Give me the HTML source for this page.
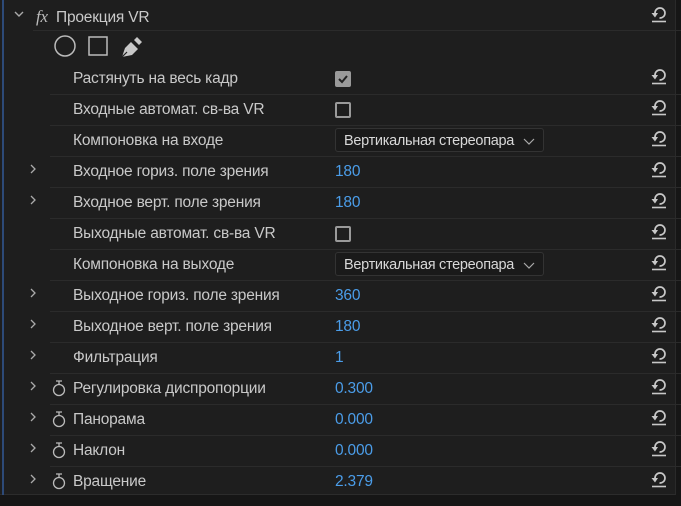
<!DOCTYPE html>
<html><head><meta charset="utf-8"><style>
*{margin:0;padding:0;box-sizing:border-box}
body{width:681px;height:506px;background:#161616;overflow:hidden;font-family:"Liberation Sans",sans-serif;color:#c9c9c9;position:relative}
#panel{position:absolute;left:0;top:0;width:676px;height:495px;background:#1e1e1e;border-right:1px solid #2a2a2a;border-bottom:1px solid #2c2c2c}
#bl{position:absolute;left:2px;top:0;width:2px;height:495px;background:#2d4a78}
.t{position:absolute;font-size:15.5px;white-space:nowrap;line-height:16px;letter-spacing:-0.2px}
.v{color:#4b9de9}
.sep{position:absolute;left:50px;right:0;height:1px;background:#2b2b2b}
.chev{position:absolute;left:29px;width:8px;height:12px}
.rs{position:absolute;left:650px;width:18px;height:18px}
.cb{position:absolute;left:335px;width:16px;height:16px;border:2px solid #9a9a9a;border-radius:2px}
.dd{position:absolute;left:335px;width:209px;height:24px;border:1px solid #333;border-radius:3px;background:#1a1a1a;font-size:14.5px;letter-spacing:-0.3px;padding:4px 0 0 8px;color:#d8d8d8;white-space:nowrap}
.sw{position:absolute;left:52px;width:14px;height:18px}
</style></head><body>
<div id="panel"></div><div id="bl"></div>
<svg width="0" height="0" style="position:absolute"><defs>
<g id="r"><path d="M5 8.5A5 5 0 1 1 9.5 13" stroke="#c8c8c8" stroke-width="1.7" fill="none"/><path d="M1.5 8L8 8L5 12.5z" fill="#c8c8c8"/><path d="M2 16.5h14" stroke="#c8c8c8" stroke-width="1.6"/></g>
<g id="w"><circle cx="7" cy="11" r="5.5" stroke="#bbb" stroke-width="1.3" fill="none"/><path d="M4 2h6M7 2v3.5" stroke="#bbb" stroke-width="1.3"/></g>
<g id="c"><path d="M2 2l4 4-4 4" stroke="#aaa" stroke-width="1.3" fill="none"/></g>
</defs></svg>
<svg style="position:absolute;left:13px;top:10px" width="12" height="8"><path d="M2 2l4 4 4-4" stroke="#aaa" stroke-width="1.4" fill="none"/></svg>
<div class="t" style="left:36px;top:9px;font-family:'Liberation Serif',serif;font-style:italic;font-size:17px;color:#bbb">fx</div>
<div class="t" style="left:56px;top:10px">Проекция VR</div>
<div class="sep" style="left:33px;top:30px"></div>
<svg style="position:absolute;left:52px;top:35px" width="95" height="24"><circle cx="13" cy="11" r="10" stroke="#bbb" stroke-width="1.5" fill="none"/><rect x="37" y="2" width="18" height="18" stroke="#bbb" stroke-width="1.5" fill="none"/><path d="M70 22l3-9 6-6 7 7-6 6zM82 5l3-3 5 5-3 3z" fill="#c8c8c8"/><path d="M70 22l5-5" stroke="#1e1e1e" stroke-width="1.2"/></svg>
<svg class="rs" style="top:5px"><use href="#r"/></svg>

<div class="t" style="left:73px;top:71px">Растянуть на весь кадр</div>
<div class="cb" style="top:71px;background:#9a9a9a"><svg width="12" height="12" style="position:absolute;left:0;top:0"><path d="M2 6l3 3 5-6" stroke="#222" stroke-width="2" fill="none"/></svg></div>
<svg class="rs" style="top:67px"><use href="#r"/></svg>
<div class="sep" style="top:94px"></div>

<div class="t" style="left:73px;top:102px">Входные автомат. св-ва VR</div>
<div class="cb" style="top:102px"></div>
<svg class="rs" style="top:98px"><use href="#r"/></svg>
<div class="sep" style="top:125px"></div>

<div class="t" style="left:73px;top:133px">Компоновка на входе</div>
<div class="dd" style="top:128px">Вертикальная стереопара<svg width="12" height="7" style="position:absolute;right:8px;top:9px"><path d="M1 1l5 5 5-5" stroke="#aaa" stroke-width="1.2" fill="none"/></svg></div>
<svg class="rs" style="top:129px"><use href="#r"/></svg>
<div class="sep" style="top:156px"></div>

<svg class="chev" style="top:163px"><use href="#c"/></svg>
<div class="t" style="left:73px;top:164px">Входное гориз. поле зрения</div>
<div class="t v" style="left:335px;top:164px">180</div>
<svg class="rs" style="top:160px"><use href="#r"/></svg>
<div class="sep" style="top:187px"></div>

<svg class="chev" style="top:194px"><use href="#c"/></svg>
<div class="t" style="left:73px;top:195px">Входное верт. поле зрения</div>
<div class="t v" style="left:335px;top:195px">180</div>
<svg class="rs" style="top:191px"><use href="#r"/></svg>
<div class="sep" style="top:218px"></div>

<div class="t" style="left:73px;top:226px">Выходные автомат. св-ва VR</div>
<div class="cb" style="top:226px"></div>
<svg class="rs" style="top:222px"><use href="#r"/></svg>
<div class="sep" style="top:249px"></div>

<div class="t" style="left:73px;top:257px">Компоновка на выходе</div>
<div class="dd" style="top:252px">Вертикальная стереопара<svg width="12" height="7" style="position:absolute;right:8px;top:9px"><path d="M1 1l5 5 5-5" stroke="#aaa" stroke-width="1.2" fill="none"/></svg></div>
<svg class="rs" style="top:253px"><use href="#r"/></svg>
<div class="sep" style="top:280px"></div>

<svg class="chev" style="top:287px"><use href="#c"/></svg>
<div class="t" style="left:73px;top:288px">Выходное гориз. поле зрения</div>
<div class="t v" style="left:335px;top:288px">360</div>
<svg class="rs" style="top:284px"><use href="#r"/></svg>
<div class="sep" style="top:311px"></div>

<svg class="chev" style="top:318px"><use href="#c"/></svg>
<div class="t" style="left:73px;top:319px">Выходное верт. поле зрения</div>
<div class="t v" style="left:335px;top:319px">180</div>
<svg class="rs" style="top:315px"><use href="#r"/></svg>
<div class="sep" style="top:342px"></div>

<svg class="chev" style="top:349px"><use href="#c"/></svg>
<div class="t" style="left:73px;top:350px">Фильтрация</div>
<div class="t v" style="left:335px;top:350px">1</div>
<svg class="rs" style="top:346px"><use href="#r"/></svg>
<div class="sep" style="top:373px"></div>

<svg class="chev" style="top:380px"><use href="#c"/></svg>
<svg class="sw" style="top:379px"><use href="#w"/></svg>
<div class="t" style="left:73px;top:381px">Регулировка диспропорции</div>
<div class="t v" style="left:335px;top:381px">0.300</div>
<svg class="rs" style="top:377px"><use href="#r"/></svg>
<div class="sep" style="top:404px"></div>

<svg class="chev" style="top:411px"><use href="#c"/></svg>
<svg class="sw" style="top:410px"><use href="#w"/></svg>
<div class="t" style="left:73px;top:412px">Панорама</div>
<div class="t v" style="left:335px;top:412px">0.000</div>
<svg class="rs" style="top:408px"><use href="#r"/></svg>
<div class="sep" style="top:435px"></div>

<svg class="chev" style="top:442px"><use href="#c"/></svg>
<svg class="sw" style="top:441px"><use href="#w"/></svg>
<div class="t" style="left:73px;top:443px">Наклон</div>
<div class="t v" style="left:335px;top:443px">0.000</div>
<svg class="rs" style="top:439px"><use href="#r"/></svg>
<div class="sep" style="top:466px"></div>

<svg class="chev" style="top:473px"><use href="#c"/></svg>
<svg class="sw" style="top:472px"><use href="#w"/></svg>
<div class="t" style="left:73px;top:474px">Вращение</div>
<div class="t v" style="left:335px;top:474px">2.379</div>
<svg class="rs" style="top:470px"><use href="#r"/></svg>
</body></html>
